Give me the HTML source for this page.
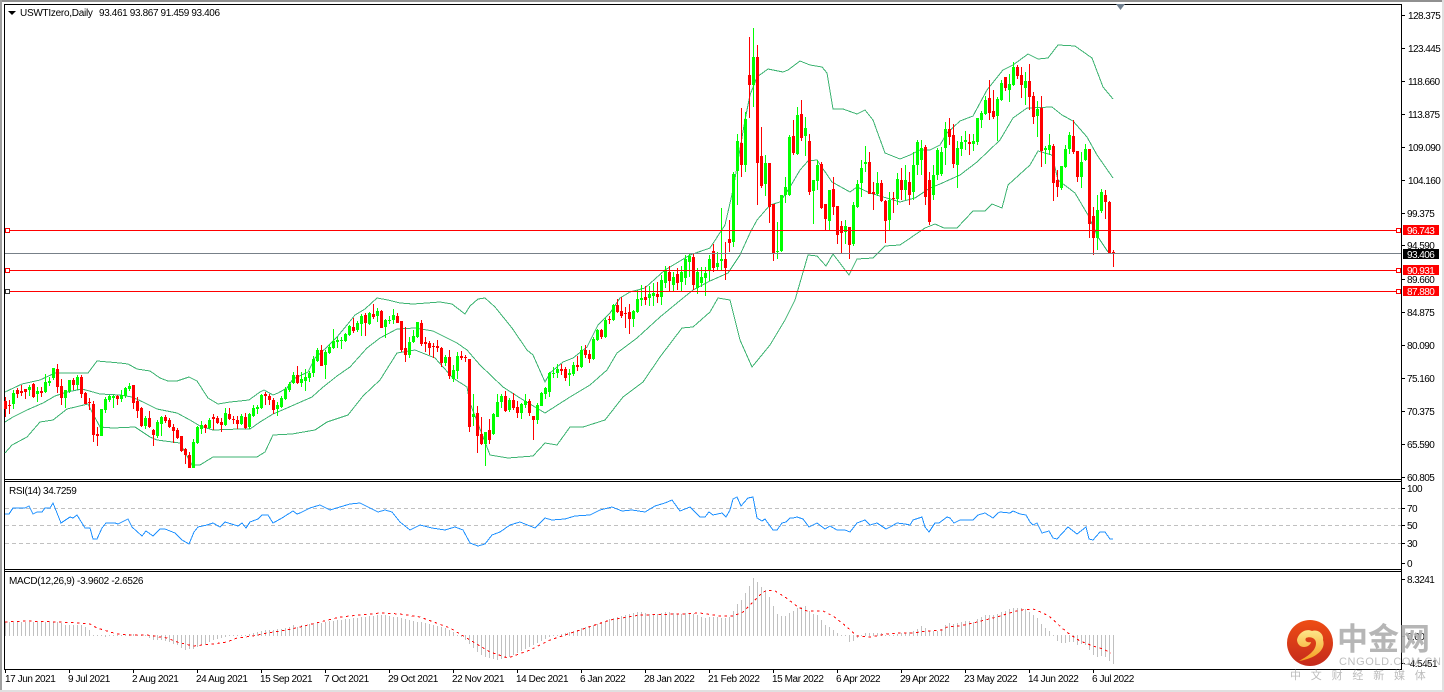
<!DOCTYPE html>
<html><head><meta charset="utf-8"><title>USWTIzero,Daily</title>
<style>
html,body{margin:0;padding:0;background:#fff;width:1444px;height:692px;overflow:hidden}
svg{display:block}
text{font-family:"Liberation Sans",sans-serif;font-size:10px;letter-spacing:-.55px;fill:#000}
.d text{letter-spacing:-.42px}
.c{shape-rendering:crispEdges;fill:none}
.cj{font-family:"Liberation Sans","Noto Sans CJK SC",sans-serif;letter-spacing:0}
</style></head><body>
<svg width="1444" height="692" viewBox="0 0 1444 692" xmlns="http://www.w3.org/2000/svg">
<defs>
<linearGradient id="lg" x1="0" y1="0" x2="0" y2="1"><stop offset="0" stop-color="#ee4d14"/><stop offset="1" stop-color="#c42a1c"/></linearGradient>
<linearGradient id="ly" x1="0" y1="0" x2="0" y2="1"><stop offset="0" stop-color="#fde68a"/><stop offset="1" stop-color="#f5a01f"/></linearGradient>
</defs>
<rect width="1444" height="692" fill="#fff"/>
<g class="c">
<path d="M0 1H1444" stroke="#909090" stroke-width="2"/>
<path d="M1 0V692" stroke="#a0a0a0" stroke-width="2"/>
<path d="M0 691H1444" stroke="#e0e0e0" stroke-width="2"/>
<path d="M1443 0V692" stroke="#e0e0e0" stroke-width="2"/>
<path d="M4.5 4V670M4 4.5H1402M1401.5 4V670M4 479.5H1402M4 481.5H1402M4 569.5H1402M4 571.5H1402M4 669.5H1402" stroke="#000"/>
</g>

<!-- Bollinger -->
<g class="c" stroke="#3cb371">
<polyline points="5,392 22,384 40,380 55,373 77,373 88,373 97,361 120,363 128,364 137,369 150,371 160,378 168,381 177,381 189,377 197,381 208,398 218,404 230,402 240,401 249,400 260,392 264,390 273,395 278,393 287,388 293,379 308,372 315,358 327,347 337,337 347,325 355,315 365,309 377,298 388,300 400,303 413,304 427,303 440,302 452,304 465,314 470,306 478,299 485,298 495,307 512,328 527,350 533,355 545,382 550,373 563,362 573,358 587,347 598,325 610,313 620,298 630,292 645,288 665,270 690,255 710,248 725,225 733,190 745,120 750,95 757,77 768,69 783,72 788,70 800,61 810,65 822,67 827,73 833,109 843,109 857,114 865,110 873,120 885,153 895,157 900,159 910,155 920,150 930,150 940,145 947,133 960,121 973,116 987,90 1003,70 1013,65 1028,54 1038,59 1048,58 1058,45 1075,46 1092,58 1103,87 1113,99"/>
<polyline points="5,422 13,417 27,410 43,403 55,396 67,392 82,389 93,392 100,394 120,395 132,397 143,402 157,409 177,413 190,420 200,426 213,430 240,429 250,429 260,422 273,414 287,408 312,397 322,388 337,376 350,367 367,348 380,338 397,329 415,328 433,331 457,343 467,350 480,365 503,387 520,398 545,413 570,397 590,385 607,370 617,353 637,338 660,317 677,303 693,290 710,281 728,273 740,255 750,233 757,220 770,205 780,202 790,187 800,170 808,161 817,160 832,182 850,192 857,187 870,193 900,202 915,198 930,188 940,184 960,175 977,162 1000,140 1013,118 1027,108 1052,107 1062,115 1073,121 1087,137 1097,155 1113,178"/>
<polyline points="5,453 12,445 27,437 40,422 53,420 67,409 88,404 92,412 100,427 113,428 135,427 150,437 157,440 180,443 192,465 200,465 213,457 257,457 265,452 273,435 292,434 315,430 327,422 348,415 363,396 380,380 397,353 415,350 435,358 453,378 467,387 470,403 490,455 508,458 533,456 545,443 557,445 570,427 583,427 605,420 623,397 643,382 660,357 682,328 693,327 710,312 718,298 730,300 740,340 752,367 770,345 785,320 795,300 808,255 817,256 826,266 833,254 849,275 857,259 873,258 885,246 900,245 925,228 935,224 944,228 957,228 973,211 985,211 992,204 1002,208 1008,185 1030,165 1038,151 1052,155 1058,180 1075,193 1088,215 1098,237 1108,252"/>
</g>

<!-- Candle wicks and bodies: red -->
<g class="c" stroke="#f00">
<path stroke-width="1" d="M5.5 397V417M9.5 400V414M17.5 388V398M21.5 385V396M25.5 389V399M33.5 383V398M41.5 387V397M57.5 364V393M61.5 379V405M73.5 378V390M81.5 375V398M85.5 392V404M89.5 398V410M93.5 401V442M97.5 427V446M117.5 395V405M133.5 385V409M137.5 397V418M141.5 407V427M149.5 411V428M153.5 429V446M165.5 415V423M169.5 418V428M173.5 424V443M177.5 428V439M181.5 436V452M185.5 448V464M189.5 452V468M205.5 424V433M213.5 414V430M217.5 416V424M221.5 418V432M229.5 408V420M233.5 416V424M237.5 416V429M245.5 413V429M265.5 392V405M269.5 394V405M273.5 398V414M297.5 366V384M321.5 345V366M353.5 318V333M365.5 313V336M373.5 304V319M381.5 310V328M397.5 313V323M401.5 321V352M405.5 327V362M421.5 320V346M425.5 337V352M429.5 341V355M433.5 343V358M437.5 340V352M441.5 347V367M449.5 350V379M461.5 351V360M465.5 355V362M469.5 359V432M477.5 406V453M481.5 417V445M489.5 419V444M505.5 391V412M513.5 393V410M517.5 401V418M529.5 399V416M533.5 416V440M561.5 364V375M565.5 367V381M577.5 356V371M585.5 345V358M589.5 350V363M601.5 329V339M609.5 316V324M617.5 299V313M621.5 297V318M625.5 307V328M629.5 304V334M645.5 286V305M657.5 282V303M669.5 266V292M677.5 268V290M693.5 253V290M713.5 244V272M725.5 242V280M729.5 220V252M741.5 108V177M749.5 37V118M757.5 45V205M761.5 127V188M769.5 163V223M773.5 204V261M793.5 120V155M801.5 100V141M809.5 134V195M821.5 162V209M825.5 204V230M833.5 177V215M837.5 206V244M841.5 221V254M849.5 227V259M869.5 152V194M873.5 182V210M881.5 180V202M885.5 200V243M893.5 192V213M901.5 168V200M909.5 172V205M925.5 145V205M929.5 172V225M949.5 118V145M953.5 124V168M969.5 134V155M989.5 80V120M993.5 90V119M1005.5 77V91M1017.5 65V79M1021.5 67V98M1029.5 64V110M1033.5 92V124M1041.5 96V167M1053.5 144V201M1057.5 170V197M1073.5 120V154M1077.5 151V182M1089.5 149V238M1093.5 207V255M1105.5 190V219M1109.5 201V254M1113.5 250V267"/>
<path stroke-width="3" d="M5.5 401V409M9.5 405V406M17.5 390V394M21.5 391V393M25.5 389V392M33.5 384V397M41.5 391V393M57.5 369V387M61.5 386V398M73.5 380V385M81.5 377V394M85.5 393V404M89.5 402V403M93.5 404V435M97.5 434V436M117.5 396V399M133.5 385V403M137.5 401V411M141.5 408V426M149.5 418V427M153.5 430V435M165.5 417V421M169.5 420V427M173.5 427V431M177.5 430V438M181.5 436V451M185.5 449V455M189.5 455V468M205.5 425V428M213.5 417V419M217.5 418V423M221.5 422V425M229.5 414V419M233.5 419V420M237.5 420V424M245.5 417V428M265.5 394V396M269.5 396V400M273.5 400V410M297.5 375V383M321.5 350V366M353.5 327V331M365.5 315V323M373.5 314V317M381.5 311V328M397.5 316V323M401.5 321V350M405.5 348V355M421.5 323V344M425.5 342V344M429.5 343V348M433.5 346V347M437.5 346V348M441.5 348V363M449.5 357V376M461.5 356V358M465.5 357V358M469.5 359V427M477.5 413V436M481.5 434V444M489.5 430V440M505.5 396V411M513.5 400V408M517.5 407V413M529.5 401V413M533.5 416V420M561.5 369V371M565.5 369V378M577.5 365V367M585.5 350V355M589.5 354V359M601.5 330V337M609.5 319V320M617.5 305V312M621.5 311V316M625.5 313V314M629.5 312V319M645.5 297V300M657.5 294V297M669.5 272V281M677.5 274V283M693.5 257V285M713.5 251V268M725.5 259V268M729.5 239V243M741.5 143V165M749.5 75V85M757.5 57V163M761.5 156V186M769.5 163V207M773.5 204V253M793.5 136V153M801.5 114V138M809.5 141V192M821.5 164V208M825.5 204V219M833.5 189V207M837.5 206V235M841.5 226V233M849.5 227V245M869.5 162V194M873.5 192V194M881.5 183V201M885.5 201V221M893.5 198V199M901.5 180V190M909.5 182V195M925.5 147V197M929.5 180V222M949.5 129V137M953.5 135V164M969.5 142V144M989.5 98V113M993.5 111V117M1005.5 77V88M1017.5 67V76M1021.5 75V85M1029.5 81V97M1033.5 96V117M1041.5 108V151M1053.5 146V183M1057.5 180V187M1073.5 136V152M1077.5 151V177M1089.5 149V224M1093.5 216V238M1105.5 195V202M1109.5 202V254M1113.5 252V253"/>
</g>
<!-- green -->
<g class="c" stroke="#0f0">
<path stroke-width="1" d="M13.5 390V409M29.5 385V396M37.5 387V402M45.5 374V393M49.5 377V386M53.5 368V380M65.5 390V408M69.5 380V393M77.5 375V390M101.5 409V436M105.5 397V413M109.5 395V402M113.5 395V408M121.5 390V402M125.5 387V398M129.5 383V391M145.5 416V429M157.5 420V438M161.5 416V436M193.5 439V468M197.5 426V444M201.5 421V434M209.5 418V429M225.5 408V426M241.5 414V425M249.5 413V429M253.5 405V417M257.5 405V414M261.5 394V409M277.5 402V416M281.5 396V408M285.5 387V400M289.5 382V392M293.5 372V384M301.5 372V387M305.5 369V391M309.5 371V382M313.5 356V377M317.5 348V362M325.5 350V379M329.5 344V354M333.5 329V349M337.5 337V348M341.5 337V349M345.5 333V342M349.5 325V336M357.5 321V332M361.5 314V336M369.5 312V325M377.5 308V322M385.5 319V338M389.5 316V324M393.5 309V324M409.5 337V358M413.5 330V343M417.5 322V338M445.5 355V366M453.5 365V382M457.5 352V379M473.5 394V426M485.5 432V466M493.5 413V435M497.5 394V417M501.5 394V408M509.5 398V412M521.5 403V419M525.5 394V408M537.5 403V424M541.5 392V406M545.5 387V399M549.5 372V397M553.5 367V378M557.5 364V378M569.5 369V386M573.5 362V376M581.5 346V368M593.5 337V360M597.5 329V341M605.5 318V338M613.5 304V321M633.5 310V327M637.5 290V313M641.5 285V306M649.5 286V306M653.5 283V306M661.5 275V305M665.5 266V288M673.5 272V291M681.5 266V292M685.5 255V285M689.5 253V277M697.5 268V294M701.5 267V287M705.5 267V296M709.5 255V281M717.5 252V270M721.5 208V270M733.5 172V247M737.5 134V205M745.5 112V172M753.5 28V107M765.5 155V196M777.5 222V259M781.5 195V252M785.5 177V203M789.5 135V196M797.5 107V155M805.5 117V156M813.5 180V224M817.5 160V190M829.5 190V230M845.5 220V244M853.5 202V246M857.5 180V208M861.5 160V197M865.5 146V172M877.5 172V196M889.5 192V231M897.5 173V205M905.5 165V200M913.5 152V200M917.5 140V175M921.5 140V175M933.5 165V200M937.5 148V180M941.5 147V176M945.5 122V165M957.5 141V188M961.5 136V156M965.5 131V150M973.5 134V151M977.5 118V145M981.5 111V128M985.5 96V115M997.5 97V141M1001.5 80V101M1009.5 74V102M1013.5 62V86M1025.5 72V105M1037.5 101V137M1045.5 146V164M1049.5 134V155M1061.5 166V190M1065.5 145V168M1069.5 132V154M1081.5 152V188M1085.5 144V161M1097.5 195V250M1101.5 189V213"/>
<path stroke-width="3" d="M13.5 393V404M29.5 387V390M37.5 391V394M45.5 382V392M49.5 381V383M53.5 368V378M65.5 390V398M69.5 380V391M77.5 377V385M101.5 409V436M105.5 399V410M109.5 396V400M113.5 396V398M121.5 395V399M125.5 388V396M129.5 386V389M145.5 418V426M157.5 422V436M161.5 417V424M193.5 442V468M197.5 427V443M201.5 425V429M209.5 420V428M225.5 413V425M241.5 416V424M249.5 414V427M253.5 408V416M257.5 407V409M261.5 395V408M277.5 405V409M281.5 398V407M285.5 389V399M289.5 384V390M293.5 375V383M301.5 379V383M305.5 377V381M309.5 373V378M313.5 359V373M317.5 350V361M325.5 352V365M329.5 347V353M333.5 341V348M337.5 340V342M341.5 340V341M345.5 334V341M349.5 326V335M357.5 323V330M361.5 316V324M369.5 313V324M377.5 311V316M385.5 320V327M389.5 320V321M393.5 315V320M409.5 342V355M413.5 336V342M417.5 322V337M445.5 357V363M453.5 370V379M457.5 356V371M473.5 414V417M485.5 432V444M493.5 414V434M497.5 402V417M501.5 396V402M509.5 400V410M521.5 404V413M525.5 401V405M537.5 405V420M541.5 393V406M545.5 388V394M549.5 373V392M553.5 373V374M557.5 369V373M569.5 373V375M573.5 365V374M581.5 350V367M593.5 339V359M597.5 330V340M605.5 320V337M613.5 305V320M633.5 311V319M637.5 299V312M641.5 298V300M649.5 294V298M653.5 293V296M661.5 280V297M665.5 270V283M673.5 277V285M681.5 272V282M685.5 259V278M689.5 256V262M697.5 272V288M701.5 277V283M705.5 273V278M709.5 259V270M717.5 263V267M721.5 259V261M733.5 174V242M737.5 141V171M745.5 119V165M753.5 57V85M765.5 163V184M777.5 251V252M781.5 195V251M785.5 187V195M789.5 137V195M797.5 115V154M805.5 128V136M813.5 180V191M817.5 165V181M829.5 190V221M845.5 226V232M853.5 205V244M857.5 184V207M861.5 168V183M865.5 162V164M877.5 183V194M889.5 200V220M897.5 179V199M905.5 180V190M913.5 165V192M917.5 142V165M921.5 148V160M933.5 175V195M937.5 150V175M941.5 152V174M945.5 129V148M957.5 148V165M961.5 142V149M965.5 140V142M973.5 141V144M977.5 118V142M981.5 113V120M985.5 100V114M997.5 99V116M1001.5 83V100M1009.5 84V90M1013.5 67V85M1025.5 81V88M1037.5 109V116M1045.5 148V150M1049.5 145V150M1061.5 166V188M1065.5 149V167M1069.5 135V149M1081.5 162V177M1085.5 149V160M1097.5 210V238M1101.5 192V211"/>
</g>

<!-- Horizontal lines -->
<g class="c">
<path d="M5 253.5H1401" stroke="#778088"/>
<path d="M5 230.5H1401M5 270.5H1401M5 291.5H1401" stroke="#f00"/>
<path d="M5.5 228.5h4v4h-4zM5.5 268.5h4v4h-4zM1396.5 228.5h4v4h-4zM1396.5 268.5h4v4h-4zM1396.5 289.5h4v4h-4z" stroke="#f00" fill="#fff"/>
<path d="M5.5 289.5h4v4h-4z" stroke="#333" fill="#fff"/>
</g>
<path d="M1116 4H1125L1120.5 10Z" fill="#708090"/>
<path d="M8 11H16L12 15Z" fill="#000"/>
<text x="20" y="16" style="letter-spacing:-.27px">USWTIzero,Daily</text>
<text x="99" y="16" style="letter-spacing:-.37px">93.461 93.867 91.459 93.406</text>

<!-- Price axis -->
<path class="c" stroke="#000" d="M1401 15.5h4M1401 48.5h4M1401 81.5h4M1401 114.5h4M1401 147.5h4M1401 180.5h4M1401 213.5h4M1401 245.5h4M1401 279.5h4M1401 312.5h4M1401 345.5h4M1401 378.5h4M1401 411.5h4M1401 444.5h4M1401 477.5h4M1401 488.5h4M1401 508.5h4M1401 525.5h4M1401 543.5h4M1401 563.5h4M1401 579.5h4M1401 636.5h4M1401 663.5h4"/>
<text x="1408" y="19">128.375</text><text x="1408" y="52">123.445</text><text x="1408" y="85">118.660</text><text x="1408" y="118">113.875</text><text x="1408" y="151">109.090</text><text x="1408" y="184">104.160</text><text x="1407" y="217">99.375</text><text x="1407" y="249">94.590</text><text x="1407" y="283">89.660</text><text x="1407" y="316">84.875</text><text x="1407" y="349">80.090</text><text x="1407" y="382">75.160</text><text x="1407" y="415">70.375</text><text x="1407" y="448">65.590</text><text x="1407" y="481">60.805</text>
<rect x="1403" y="225" width="36" height="10" fill="#f00"/><text x="1407" y="234" style="fill:#fff">96.743</text>
<rect x="1403" y="249" width="36" height="10" fill="#000"/><text x="1407" y="258" style="fill:#fff">93.406</text>
<rect x="1403" y="265" width="36" height="10" fill="#f00"/><text x="1407" y="274" style="fill:#fff">90.931</text>
<rect x="1403" y="286" width="36" height="10" fill="#f00"/><text x="1407" y="295" style="fill:#fff">87.880</text>

<!-- RSI -->
<text x="9" y="494" style="letter-spacing:-.4px">RSI(14) 34.7259</text>
<path class="c" d="M5 508.5H1401M5 525.5H1401M5 543.5H1401" stroke="#c0c0c0" stroke-dasharray="4 3"/>
<polyline class="c" stroke="#1e90ff" points="5,514 9,514 13,508 25,508 29,506 33,514 37,512 42,512 45,508 50,508 53,503 57,513 61,523 70,517 73,518 77,515 85,528 90,528 93,539 97,539 102,528 106,523 115,523 118,524 128,519 132,527 142,536 146,531 153,536 160,529 165,529 175,533 182,540 189,544 194,532 198,527 207,525 213,523 220,527 225,522 238,526 242,523 246,528 250,522 258,519 262,515 268,515 273,523 282,518 293,511 297,514 300,513 310,508 320,505 330,510 340,507 350,504 360,503 370,508 378,512 385,510 392,512 400,522 410,530 420,525 432,528 445,530 455,527 463,530 470,543 478,546 485,544 492,535 500,532 510,525 520,522 535,528 545,518 552,520 565,519 575,516 590,515 600,510 612,507 622,511 632,510 645,512 655,506 665,503 672,500 680,511 690,507 700,517 705,517 709,512 713,515 722,513 726,517 730,510 733,499 737,497 741,506 748,498 753,497 757,518 762,521 765,519 773,530 777,530 782,523 786,522 790,518 793,518 797,517 803,519 809,527 817,523 825,529 830,526 837,530 845,530 850,532 857,523 865,520 870,525 877,523 886,529 890,527 897,523 905,524 910,525 913,520 922,517 925,527 929,532 935,523 939,523 947,517 950,518 954,523 960,520 973,520 978,515 985,513 993,518 998,513 1000,512 1010,513 1013,511 1020,514 1026,515 1030,522 1033,525 1037,523 1042,533 1049,531 1053,538 1057,539 1068,527 1077,534 1086,527 1089,539 1093,540 1100,532 1105,532 1110,539 1113,539"/>
<text x="1407" y="492">100</text><text x="1407" y="512">70</text><text x="1407" y="529">50</text><text x="1407" y="547">30</text><text x="1407" y="567">0</text>

<!-- MACD -->
<text x="9" y="584" style="letter-spacing:-.3px">MACD(12,26,9) -3.9602 -2.6526</text>
<path class="c" stroke="#c0c0c0" d="M5.5 636V622M9.5 636V622M13.5 636V622M17.5 636V622M21.5 636V622M25.5 636V622M29.5 636V622M33.5 636V622M37.5 636V622M41.5 636V622M45.5 636V622M49.5 636V622M53.5 636V622M57.5 636V622M61.5 636V623M65.5 636V625M69.5 636V625M73.5 636V625M77.5 636V625M81.5 636V625M85.5 636V627M89.5 636V630M93.5 636V635M97.5 636V635M101.5 635V636M105.5 635V637M109.5 635V636M113.5 636V635M117.5 636V635M121.5 636V635M125.5 636V635M129.5 636V634M133.5 636V634M137.5 636V635M141.5 635V636M145.5 635V636M149.5 635V638M153.5 635V640M157.5 635V640M161.5 635V640M165.5 635V641M169.5 635V642M173.5 635V644M177.5 635V645M181.5 635V648M185.5 635V650M189.5 635V649M193.5 635V649M197.5 635V647M201.5 635V645M205.5 635V644M209.5 635V642M213.5 635V640M217.5 635V639M221.5 635V638M225.5 635V637M229.5 636V635M233.5 636V635M237.5 636V635M241.5 636V635M245.5 636V635M249.5 636V634M253.5 636V633M257.5 636V632M261.5 636V631M265.5 636V630M269.5 636V630M273.5 636V630M277.5 636V629M281.5 636V629M285.5 636V628M289.5 636V627M293.5 636V625M297.5 636V627M301.5 636V625M305.5 636V625M309.5 636V624M313.5 636V624M317.5 636V623M321.5 636V623M325.5 636V622M329.5 636V621M333.5 636V621M337.5 636V620M341.5 636V620M345.5 636V619M349.5 636V619M353.5 636V618M357.5 636V618M361.5 636V617M365.5 636V617M369.5 636V616M373.5 636V616M377.5 636V615M381.5 636V615M385.5 636V615M389.5 636V616M393.5 636V617M397.5 636V617M401.5 636V618M405.5 636V619M409.5 636V620M413.5 636V621M417.5 636V622M421.5 636V622M425.5 636V623M429.5 636V624M433.5 636V625M437.5 636V626M441.5 636V627M445.5 636V628M449.5 636V630M453.5 636V632M457.5 636V635M461.5 635V637M465.5 635V640M469.5 635V644M473.5 635V648M477.5 635V652M481.5 635V655M485.5 635V657M489.5 635V658M493.5 635V659M497.5 635V660M501.5 635V659M505.5 635V658M509.5 635V657M513.5 635V655M517.5 635V653M521.5 635V651M525.5 635V649M529.5 635V647M533.5 635V645M537.5 635V643M541.5 635V641M545.5 635V639M549.5 635V637M553.5 636V635M557.5 636V635M561.5 636V634M565.5 636V633M569.5 636V632M573.5 636V631M577.5 636V630M581.5 636V628M585.5 636V627M589.5 636V626M593.5 636V625M597.5 636V624M601.5 636V623M605.5 636V621M609.5 636V619M613.5 636V618M617.5 636V617M621.5 636V616M625.5 636V615M629.5 636V614M633.5 636V613M637.5 636V612M641.5 636V612M645.5 636V613M649.5 636V614M653.5 636V614M657.5 636V614M661.5 636V613M665.5 636V612M669.5 636V612M673.5 636V613M677.5 636V614M681.5 636V614M685.5 636V613M689.5 636V613M693.5 636V614M697.5 636V615M701.5 636V617M705.5 636V618M709.5 636V617M713.5 636V617M717.5 636V617M721.5 636V618M725.5 636V618M729.5 636V617M733.5 636V611M737.5 636V604M741.5 636V600M745.5 636V593M749.5 636V586M753.5 636V578M757.5 636V582M761.5 636V587M765.5 636V590M769.5 636V597M773.5 636V606M777.5 636V614M781.5 636V616M785.5 636V616M789.5 636V613M793.5 636V611M797.5 636V608M801.5 636V607M805.5 636V606M809.5 636V611M813.5 636V614M817.5 636V615M821.5 636V620M825.5 636V625M829.5 636V627M833.5 636V630M837.5 636V633M841.5 636V635M845.5 635V636M849.5 635V642M853.5 635V641M857.5 635V638M861.5 636V635M865.5 636V633M869.5 636V633M873.5 636V633M877.5 636V633M881.5 636V633M885.5 636V635M889.5 636V635M893.5 636V635M897.5 636V634M901.5 636V633M905.5 636V633M909.5 636V632M913.5 636V631M917.5 636V629M921.5 636V626M925.5 636V628M929.5 636V631M933.5 636V631M937.5 636V631M941.5 636V629M945.5 636V625M949.5 636V623M953.5 636V624M957.5 636V623M961.5 636V622M965.5 636V621M969.5 636V621M973.5 636V622M977.5 636V619M981.5 636V617M985.5 636V615M989.5 636V615M993.5 636V615M997.5 636V614M1001.5 636V612M1005.5 636V611M1009.5 636V609M1013.5 636V608M1017.5 636V608M1021.5 636V608M1025.5 636V609M1029.5 636V612M1033.5 636V615M1037.5 636V618M1041.5 636V624M1045.5 636V628M1049.5 636V631M1053.5 636V635M1057.5 635V641M1061.5 635V643M1065.5 635V643M1069.5 635V642M1073.5 635V642M1077.5 635V645M1081.5 635V644M1085.5 635V645M1089.5 635V650M1093.5 635V655M1097.5 635V657M1101.5 635V656M1105.5 635V657M1109.5 635V661M1113.5 635V664"/>
<polyline class="c" stroke="#f00" stroke-dasharray="2.5 3.5" points="5,622 25,621 60,622 80,623 90,624 97,628 107,631 117,634 133,635 147,635 167,638 177,642 193,646 213,644 227,642 237,638 253,636 267,633 287,630 300,627 340,617 380,613 400,614 420,617 450,628 470,640 490,652 508,658 530,650 550,640 580,630 610,620 640,615 680,614 700,613 720,616 733,616 743,612 750,605 762,593 767,590 775,591 785,597 798,607 807,611 823,611 833,616 847,627 857,636 870,637 887,634 900,633 913,633 927,631 942,630 947,627 960,626 977,622 997,617 1013,612 1020,610 1033,609 1043,613 1050,617 1062,628 1068,633 1080,641 1093,646 1103,649 1111,653"/>
<text x="1407" y="583">8.3241</text><text x="1407" y="640">0.00</text><text x="1407" y="667">-4.5451</text>

<!-- Time axis -->
<path class="c" stroke="#000" d="M5.5 669v4M69.5 669v4M133.5 669v4M197.5 669v4M261.5 669v4M325.5 669v4M389.5 669v4M453.5 669v4M517.5 669v4M581.5 669v4M645.5 669v4M709.5 669v4M773.5 669v4M837.5 669v4M901.5 669v4M965.5 669v4M1029.5 669v4M1093.5 669v4"/>
<g class="d"><text x="5" y="682">17 Jun 2021</text><text x="68" y="682">9 Jul 2021</text><text x="132" y="682">2 Aug 2021</text><text x="196" y="682">24 Aug 2021</text><text x="260" y="682">15 Sep 2021</text><text x="324" y="682">7 Oct 2021</text><text x="388" y="682">29 Oct 2021</text><text x="452" y="682">22 Nov 2021</text><text x="516" y="682">14 Dec 2021</text><text x="580" y="682">6 Jan 2022</text><text x="644" y="682">28 Jan 2022</text><text x="708" y="682">21 Feb 2022</text><text x="772" y="682">15 Mar 2022</text><text x="836" y="682">6 Apr 2022</text><text x="900" y="682">29 Apr 2022</text><text x="964" y="682">23 May 2022</text><text x="1028" y="682">14 Jun 2022</text><text x="1092" y="682">6 Jul 2022</text></g>

<!-- Watermark -->
<circle cx="1310" cy="643" r="23" fill="url(#lg)"/>
<path d="M1297 640C1298 633 1306 628 1312 631C1318 629 1324 634 1323 640C1326 648 1318 658 1299 661C1310 655 1316 650 1316 643C1316 638 1310 636 1306 638C1304 641 1308 643 1311 642C1310 648 1298 650 1297 640Z" fill="url(#ly)"/>
<text class="cj" x="1337" y="650" style="font-size:31px;font-weight:700;fill:#b0b0b0;fill-opacity:.92">中金网</text>
<text x="1339" y="665" style="font-size:11px;letter-spacing:.6px;fill:#b4b4b4;fill-opacity:.85">CNGOLD.COM.CN</text>
<text class="cj" x="1290" y="679" style="font-size:11px;letter-spacing:9.8px;fill:#bcbcbc">中文财经新媒体</text>
</svg>
</body></html>
